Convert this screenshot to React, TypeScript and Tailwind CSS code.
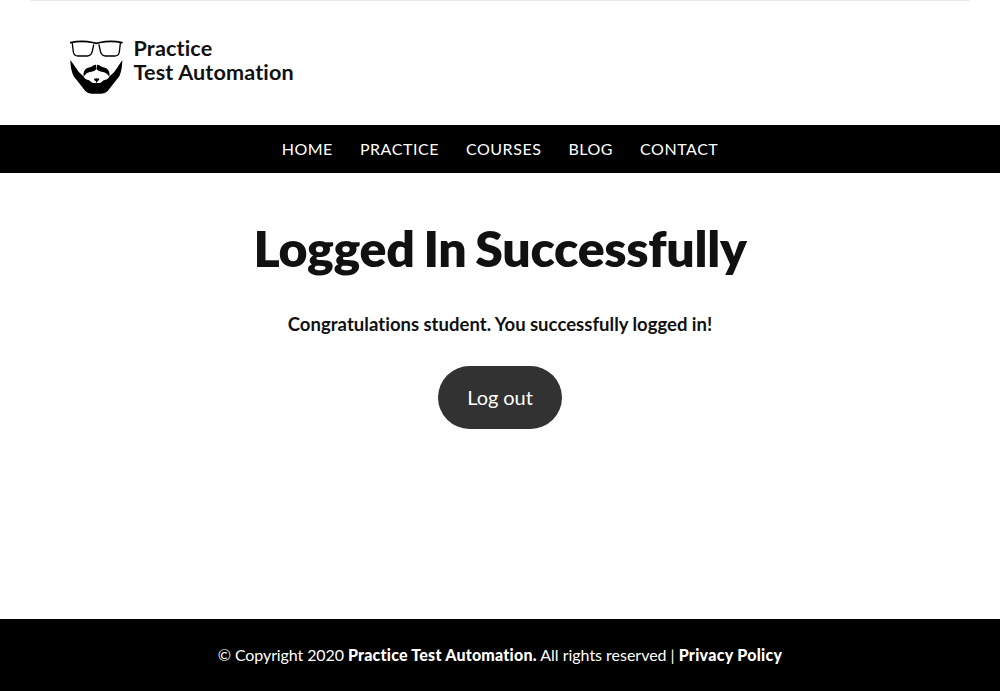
const nav = ['HOME', 'PRACTICE', 'COURSES', 'BLOG', 'CONTACT'];

function Logo() {
  return (
    <svg className="h-[56px] w-[54px]" viewBox="30 27 162 168">
      <g fill="none" stroke="#000" strokeWidth="4" strokeLinejoin="round" strokeLinecap="round">
        <path d="M32 38Q64 31 98 37.500L109 40L120 37.500Q154 31 186 38" strokeWidth="5" />
        <path d="M37 40L40 66Q42 78 54 78H82Q92 78 96 67L101 45" />
        <path d="M117 45L122 67Q126 78 136 78H164Q176 78 178 66L181 40" />
      </g>
      <path d="M31 90L46 111Q56 129 70 139Q75 149 87 151L98 159H121L131 151Q144 149 149 139Q163 129 173 111L187 90Q187 117 178 139L143 183Q136 191 124 191H95Q83 191 76 183L41 139Q31 117 31 90Z" fill="#000" />
      <path d="M71 140Q68 123 80 115L94 110Q103 103 108 104L109 118Q103 125 94 125Q79 127 71 140ZM148 140Q151 123 139 115L125 110Q116 103 111 104L110 118Q116 125 125 125Q140 127 148 140Z" fill="#000" />
      <path d="M102 146Q110 144 118 146Q118 151 113 153L110 160L107 153Q102 151 102 146Z" fill="#000" />
    </svg>
  );
}

export default function App() {
  return (
    <div className="flex h-[691px] w-full flex-col bg-white font-['Lato',sans-serif] text-[#111]">
      <header className="h-[125px] px-[30px]">
        <div className="h-px bg-[#e8e8e8]" />
        <div className="flex pt-[38px] pl-10">
          <Logo />
          <div className="-mt-[3px] ml-[9.5px] text-[21.6px] leading-6 font-bold tracking-[0.14px]">
            Practice
            <br />
            Test Automation
          </div>
        </div>
      </header>
      <nav className="flex h-12 items-center justify-center gap-[27px] bg-black text-base tracking-[0.54px] text-white">
        {nav.map((n) => (
          <a key={n}>{n}</a>
        ))}
      </nav>
      <main className="flex flex-1 flex-col items-center">
        <h1 className="mt-[45px] text-[50px] leading-[60px] font-extrabold tracking-[-0.29px] [word-spacing:-2.5px]">Logged In Successfully</h1>
        <p className="mt-[32px] text-[18.5px] leading-[28px] font-bold tracking-[0.04px] [word-spacing:-0.3px]">Congratulations student. You successfully logged in!</p>
        <a className="mt-[28px] flex h-[63px] w-[124px] items-center justify-center rounded-full bg-[#323232] pb-0.5 text-xl tracking-[-0.05px] text-white">Log out</a>
      </main>
      <footer className="flex h-[72px] items-center justify-center bg-black text-base text-white">
        <p className="tracking-[-0.1px]">
          © Copyright 2020 <b className="font-black tracking-[0.22px]">Practice Test Automation.</b>
          <span className="tracking-[-0.02px]"> All rights reserved | </span>
          <b className="font-black tracking-[0.28px]">Privacy Policy</b>
        </p>
      </footer>
    </div>
  );
}
